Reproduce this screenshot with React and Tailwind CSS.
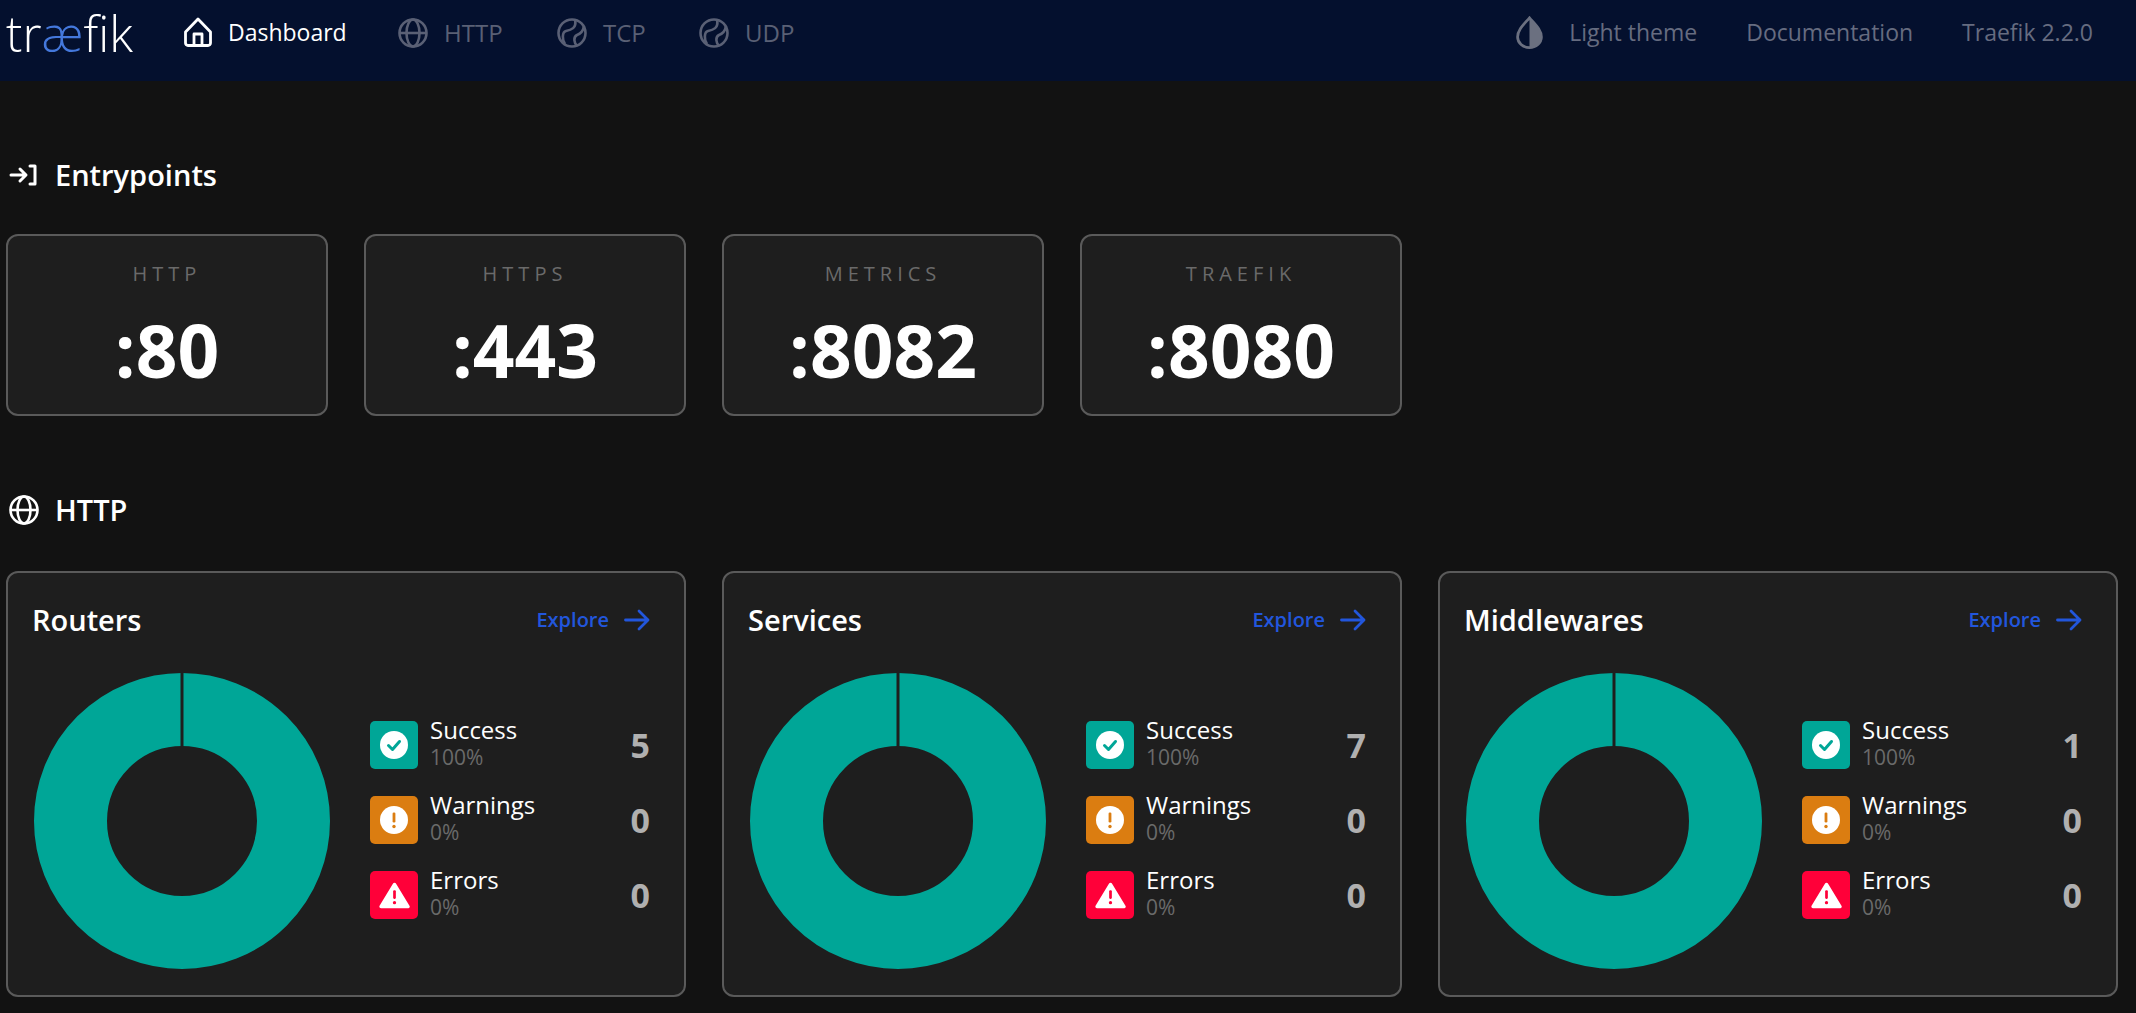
import React from 'react'

const font = "font-['Open_Sans','Lato',sans-serif]"

const HomeIcon = () => (
  <svg viewBox="0 0 28 30" className="w-[28px] h-[30px]" fill="none" stroke="currentColor" strokeWidth="2.8" strokeLinejoin="round">
    <path d="M14 2 L26.5 15 V26 a2.5 2.5 0 0 1 -2.5 2.5 H4 a2.5 2.5 0 0 1 -2.5 -2.5 V15 Z" />
    <path d="M10 28 V17 H18 V28" />
  </svg>
)

const GlobeIcon = ({ className }) => (
  <svg viewBox="0 0 30 30" className={className} fill="none" stroke="currentColor" strokeWidth="2.6">
    <circle cx="15" cy="15" r="13.5" />
    <ellipse cx="15" cy="15" rx="6.5" ry="13.5" />
    <path d="M1.5 15 H28.5" />
  </svg>
)

const BallIcon = () => (
  <svg viewBox="0 0 30 30" className="w-[30px] h-[30px]" fill="none" stroke="currentColor" strokeWidth="2.6">
    <circle cx="15" cy="15" r="13.5" />
    <path d="M18 2 C 20 10, 14 12, 9 13 C 5 14, 5 22, 8 26" />
    <path d="M27 8 C 26 14, 23 16, 20 17 C 16 19, 17 25, 20 27.5" />
  </svg>
)

const DropIcon = () => (
  <svg viewBox="0 0 30 36" className="w-[29px] h-[33px]" fill="none">
    <path d="M15 2 C 9 9, 2 15, 2 23 a13 11.5 0 0 0 26 0 C 28 15, 21 9, 15 2 Z" stroke="#6b7080" strokeWidth="3" />
    <path d="M15 2 C 21 9, 28 15, 28 23 a13 11.5 0 0 1 -13 11.5 Z" fill="#6b7080" />
  </svg>
)

const EntryIcon = () => (
  <svg viewBox="0 0 28 22" className="w-[28px] h-[22px]" fill="none" stroke="currentColor" strokeWidth="3" strokeLinecap="round" strokeLinejoin="round">
    <path d="M2 11 H16 M11 5 L17 11 L11 17" />
    <path d="M21 2 H26 V20 H21" />
  </svg>
)

const ArrowIcon = () => (
  <svg viewBox="0 0 26 22" className="w-[26px] h-[22px]" fill="none" stroke="currentColor" strokeWidth="2.8" strokeLinecap="round" strokeLinejoin="round">
    <path d="M1.5 11 H24 M15 2 L24 11 L15 20" />
  </svg>
)

const SuccessIcon = () => (
  <svg viewBox="0 0 28 28" className="w-[28px] h-[28px]">
    <circle cx="14" cy="14" r="14" fill="#fff" />
    <path d="M8.5 14.5 L12.5 18.5 L19.5 10.5" fill="none" stroke="#00a697" strokeWidth="3" strokeLinecap="round" strokeLinejoin="round" />
  </svg>
)

const WarningIcon = () => (
  <svg viewBox="0 0 28 28" className="w-[28px] h-[28px]">
    <circle cx="14" cy="14" r="14" fill="#fff" />
    <rect x="12.6" y="6.5" width="2.8" height="10" rx="1.2" fill="#db7d11" />
    <circle cx="14" cy="20.5" r="1.7" fill="#db7d11" />
  </svg>
)

const ErrorIcon = () => (
  <svg viewBox="0 0 32 28" className="w-[31px] h-[27px]">
    <path d="M16 2.5 L30 25.5 H2 Z" fill="#fff" stroke="#fff" strokeWidth="3.5" strokeLinejoin="round" />
    <rect x="14.6" y="8.5" width="2.8" height="9" rx="1.2" fill="#ff0039" />
    <circle cx="16" cy="21.5" r="1.7" fill="#ff0039" />
  </svg>
)

// full ring with a thin gap at twelve o'clock
const Donut = () => (
  <svg viewBox="0 0 296 296" className="w-[296px] h-[296px] shrink-0 ml-[2px]">
    <circle cx="148" cy="148" r="111.5" fill="none" stroke="#00a697" strokeWidth="73" />
    <rect x="146.5" y="0" width="3" height="75" fill="#1e1e1e" />
  </svg>
)

const NavItem = ({ icon, label, className }) => (
  <div className={`flex items-center gap-[16px] ${className}`}>
    {icon}
    <span>{label}</span>
  </div>
)

const EntryCard = ({ name, port }) => (
  <div className="w-[322px] h-[182px] rounded-[12px] border-2 border-[#5a5a5a] bg-[#1e1e1e] flex flex-col items-center pt-[26px]">
    <div className="text-[20px] leading-[24px] tracking-[5px] text-[#6a6a6a]">{name}</div>
    <div className="mt-[22px] text-[73px] leading-[84px] font-bold text-white">{port}</div>
  </div>
)

const StatRow = ({ color, icon, label, pct, count }) => (
  <div className="flex items-center h-[48px]">
    <div className={`w-[48px] h-[48px] rounded-[5px] flex items-center justify-center ${color}`}>{icon}</div>
    <div className="ml-[12px] flex-1">
      <div className="text-[24px] leading-[26px] -mt-[2px] text-white">{label}</div>
      <div className="text-[21px] leading-[28px] text-[#6a6a6a]">{pct}</div>
    </div>
    <div className="text-[34px] font-bold text-[#b0b0b0]">{count}</div>
  </div>
)

const SummaryCard = ({ title, counts }) => (
  <div className="w-[680px] h-[426px] rounded-[12px] border-2 border-[#5a5a5a] bg-[#1e1e1e] px-[24px] pt-[29px]">
    <div className="flex items-center justify-between h-[36px]">
      <div className="text-[29px] font-semibold text-white">{title}</div>
      <div className="flex items-center gap-[15px] text-[20px] font-semibold text-[#2256dc] pr-[10px]">
        <span>Explore</span>
        <ArrowIcon />
      </div>
    </div>
    <div className="flex mt-[35px]">
      <Donut />
      <div className="ml-[40px] mt-[48px] flex-1 flex flex-col gap-[27px] pr-[10px]">
        <StatRow color="bg-[#00a697]" icon={<SuccessIcon />} label="Success" pct="100%" count={counts} />
        <StatRow color="bg-[#db7d11]" icon={<WarningIcon />} label="Warnings" pct="0%" count="0" />
        <StatRow color="bg-[#ff0039]" icon={<ErrorIcon />} label="Errors" pct="0%" count="0" />
      </div>
    </div>
  </div>
)

const SectionTitle = ({ icon, children, className }) => (
  <div className={`flex items-center h-[36px] pl-[3px] text-white ${className}`}>
    <div className="w-[46px]">{icon}</div>
    <div className="text-[29px] font-semibold">{children}</div>
  </div>
)

export default function App() {
  return (
    <div className={`min-h-screen bg-[#121212] ${font} overflow-hidden`}>
      <header className="h-[81px] bg-[#04102e] flex justify-between pl-[6px] pr-[43px] pt-[15px]">
        <div className="flex items-start">
          <div className="w-[178px] text-[49px] leading-[36px] font-light text-white">
            tr<span className="text-[#4478dc]">æ</span>fik
          </div>
          <NavItem icon={<HomeIcon />} label="Dashboard" className="text-[23px] text-white w-[214px]" />
          <NavItem icon={<GlobeIcon className="w-[30px] h-[30px]" />} label="HTTP" className="text-[24px] text-[#5a6075] w-[159px]" />
          <NavItem icon={<BallIcon />} label="TCP" className="text-[24px] text-[#5a6075] w-[142px]" />
          <NavItem icon={<BallIcon />} label="UDP" className="text-[24px] text-[#5a6075]" />
        </div>
        <div className="flex items-start gap-[49px] text-[23px] text-[#666c80]">
          <NavItem icon={<DropIcon />} label="Light theme" className="gap-[25px]" />
          <span>Documentation</span>
          <span>Traefik 2.2.0</span>
        </div>
      </header>

      <main className="pl-[6px]">
        <SectionTitle icon={<EntryIcon />} className="mt-[76px]">Entrypoints</SectionTitle>
        <div className="flex gap-[36px] mt-[41px]">
          <EntryCard name="HTTP" port=":80" />
          <EntryCard name="HTTPS" port=":443" />
          <EntryCard name="METRICS" port=":8082" />
          <EntryCard name="TRAEFIK" port=":8080" />
        </div>
        <SectionTitle icon={<GlobeIcon className="w-[30px] h-[30px]" />} className="mt-[76px]">HTTP</SectionTitle>
        <div className="flex gap-[36px] mt-[43px]">
          <SummaryCard title="Routers" counts="5" />
          <SummaryCard title="Services" counts="7" />
          <SummaryCard title="Middlewares" counts="1" />
        </div>
      </main>
    </div>
  )
}
